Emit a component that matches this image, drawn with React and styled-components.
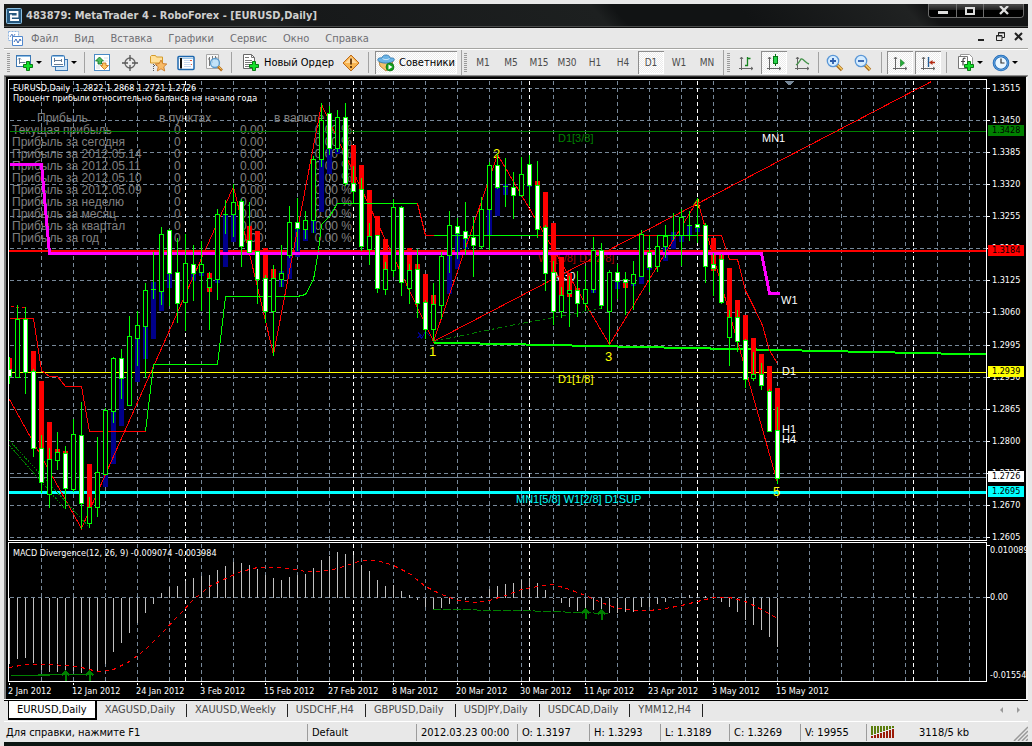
import styled, { createGlobalStyle } from 'styled-components';

const UI_FONT = '"DejaVu Sans Condensed", "Noto Sans", sans-serif';

const GlobalStyle = createGlobalStyle`
  * { box-sizing: border-box; }
  body {
    margin: 0;
    background: #e8e8e8;
    font-family: ${UI_FONT};
    font-size: 11px;
    color: #000;
  }
  button {
    font: inherit;
    color: inherit;
    background: none;
    border: 0;
    margin: 0;
    padding: 0;
  }
`;

const Window = styled.div`
  display: flex;
  flex-direction: column;
  min-height: 100vh;
  padding: 4px 4px 0;
`;

const TitleBar = styled.header`
  display: flex;
  align-items: center;
  height: 24px;
  padding: 0 4px 0 2px;
  background: linear-gradient(50deg, #191b1b 0 18%, #1f2121 26%, #17191a 30%, #1d2020 58%, #111314 60% 72%, #202222 88%, #131415 90%);
  border-bottom: 1px solid #101010;
  box-shadow: inset 0 -1px 0 #484a4a;
`;

const Caption = styled.h1`
  flex: 1;
  margin: 0 0 0 4px;
  font-size: 11px;
  font-weight: bold;
  color: #cfcfcf;
  white-space: nowrap;
`;

const WindowControls = styled.div`
  display: flex;
  align-self: flex-start;
  height: 14px;
  border: 1px solid #6d6d6d;
  border-top: 0;
  border-radius: 0 0 4px 4px;
  overflow: hidden;
`;

const WindowButton = styled.button`
  display: flex;
  align-items: center;
  justify-content: center;
  width: ${({ $wide }) => ($wide ? 40 : 27)}px;
  background: linear-gradient(#444 0 10%, #1b1b1b 50%, #000 50%);
  & + & { border-left: 1px solid #6d6d6d; }
`;

const MenuBar = styled.nav`
  display: flex;
  align-items: center;
  height: 21px;
  padding: 0 4px;
  color: #6f6f74;
  border-bottom: 1px solid #a5a5a2;
`;

const MenuItem = styled.button`
  padding: 0 8px;
  white-space: nowrap;
`;

const ChildControls = styled.div`
  display: flex;
  gap: 8px;
  margin-left: auto;
  color: #222;
`;

const Toolbar = styled.div`
  display: flex;
  align-items: center;
  height: 27px;
  padding-left: 3px;
  border-top: 1px solid #fff;
  border-bottom: 1px solid #8c8c8c;
  overflow: hidden;
`;

const Grip = styled.span`
  flex: none;
  width: 3px;
  height: 20px;
  margin-right: ${({ $after }) => $after || 1}px;
  background: repeating-linear-gradient(#9a9a9a 0 1px, #e8e8e8 1px 2px);
`;

const Divider = styled.span`
  flex: none;
  width: 1px;
  height: ${({ $full }) => ($full ? 26 : 21)}px;
  margin: 0 ${({ $gap }) => $gap || 3}px;
  background: #a2a2a2;
`;

const pressed = 'repeating-conic-gradient(#fff 0 25%, #ebebeb 0 50%) 0 0 / 2px 2px';

const ToolButton = styled.button`
  display: flex;
  flex: none;
  align-items: center;
  justify-content: center;
  width: ${({ $narrow }) => ($narrow ? 26 : 28)}px;
  height: 23px;
  color: #4c4c4c;
  font-size: 10px;
  background: ${({ $on }) => ($on ? pressed : 'none')};
  box-shadow: ${({ $on }) => ($on ? 'inset 1px 1px 0 #8d8d8d, inset -1px -1px 0 #fff' : 'none')};
`;

const SplitButton = styled(ToolButton)`
  width: 35px;
  gap: 2px;
  padding-left: 1px;
`;

const LabelButton = styled(ToolButton)`
  width: auto;
  gap: 4px;
  margin: 0 ${({ $on }) => ($on ? 2 : 0)}px 0 ${({ $on }) => ($on ? 3 : 0)}px;
  padding: 0 ${({ $on }) => ($on ? 2 : 3)}px 0 ${({ $on }) => ($on ? 2 : 7)}px;
  color: #000;
  font-size: 11px;
  white-space: nowrap;
`;

const ToolGroup = styled.div`
  display: flex;
  flex: none;
  gap: 2px;
`;

const Arrow = styled.span`
  flex: none;
  border: solid transparent;
  border-width: 3px 3px 0;
  border-top-color: #000;
`;

const ChartWindow = styled.main`
  display: flex;
  flex-direction: column;
  gap: 1px;
  padding: 2px 0 0 2px;
  background: #000;
  border: solid #808080;
  border-width: 1px 2px 0;
  border-color: #333 #f2f2f2 #f2f2f2 #808080;
`;

const ChartRow = styled.section`
  display: grid;
  grid-template: ${({ $height }) => $height}px / 1fr 39px;
`;

const Plot = styled.div`
  position: relative;
  border: 1px solid #fff;
  overflow: hidden;
`;

const Drawing = styled.svg`
  position: relative;
  display: block;
  width: 100%;
  height: 100%;
  font-family: ${UI_FONT};
  font-size: 9px;
  fill: #fff;
`;

const TimeAxis = styled.div`
  height: 16px;
`;

const ProfitTable = styled.table`
  position: absolute;
  top: 32px;
  left: 3px;
  width: 340px;
  table-layout: fixed;
  border-collapse: collapse;
  font: 12px/12px "Liberation Sans", Arial, sans-serif;
  color: #808080;
  th, td {
    height: 12px;
    padding: 0;
    font-weight: normal;
    text-align: left;
    white-space: nowrap;
  }
  th:first-child { padding-left: 25px; }
  td:nth-child(2) { padding-left: 15px; }
  td:last-child { text-align: right; }
`;

const Tabs = styled.div`
  display: flex;
  height: 22px;
  padding-left: 4px;
  color: #444;
  border-top: 1px solid #fff;
  box-shadow: inset 0 1px 0 #000;
`;

const Tab = styled.button`
  position: relative;
  padding: 0 ${({ $active }) => ($active ? 8 : 12)}px 0 8px;
  height: ${({ $active }) => ($active ? 20 : 19)}px;
  white-space: nowrap;
  color: ${({ $active }) => ($active ? '#000' : '#4a4a4a')};
  background: ${({ $active }) => ($active ? '#fff' : 'none')};
  border: ${({ $active }) => ($active ? '1px solid #000' : '0')};
  border-right: ${({ $active }) => ($active ? '2px' : '0')} solid #000;
  border-bottom-width: ${({ $active }) => ($active ? 2 : 0)}px;
  &:not(:first-child)::after {
    content: "";
    position: absolute;
    top: 4px;
    right: 0;
    width: 1px;
    height: 13px;
    background: #222;
  }
`;

const TabScroll = styled.div`
  display: flex;
  gap: 12px;
  align-items: center;
  margin-left: auto;
  padding-right: 7px;
`;

const StatusBar = styled.footer`
  display: grid;
  grid-template-columns: 303px 109px 101px 72px 71px 69px 71px 66px 1fr;
  align-items: center;
  height: 21px;
  border-top: 1px solid #fff;
`;

const StatusCell = styled.span`
  display: flex;
  align-items: center;
  height: 17px;
  padding-left: ${({ $first }) => ($first ? 2 : 4)}px;
  border-left: ${({ $first }) => ($first ? 0 : 1)}px solid #9c9c9c;
  white-space: nowrap;
`;

const Traffic = styled(StatusCell)`
  gap: 24px;
`;

const Resize = styled.svg`
  align-self: flex-end;
  margin-left: auto;
`;

const BottomEdge = styled.div`
  height: 4px;
  margin-right: -4px;
  background: #0c1512;
`;

/* ---------- icons ---------- */

const Icon = ({ size = 18, children }) => (
  <svg width={size} height={size} viewBox="0 0 18 18" fill="none" aria-hidden="true">
    {children}
  </svg>
);

const Plus = ({ x, y }) => (
  <path
    transform={`translate(${x} ${y})`}
    d="M3.5.5h3v3h3v3h-3v3h-3v-3h-3v-3h3z"
    fill="#13e02a"
    stroke="#077a12"
  />
);

const NewChartIcon = () => (
  <Icon>
    <rect x=".5" y="1.500" width="14" height="11" fill="#fff" stroke="#3c78b4" />
    <path d="M1 2.500h13" stroke="#8ebfe8" />
    <path d="M3.500 4v6M2 5.500l1.500-1.500L5 5.500M3.500 8.500h6" stroke="#667c94" />
    <Plus x={7} y={7} />
  </Icon>
);

const ProfilesIcon = () => (
  <Icon>
    <rect x="4.500" y="5.500" width="12" height="11" fill="#cfe5f7" stroke="#3c78b4" />
    <rect x=".5" y="1.500" width="13" height="11" rx="1" fill="#fff" stroke="#3c78b4" />
    <path d="M1 2.500h12" stroke="#8ebfe8" />
    <path d="M3.500 4v4M3 6.500h8M10.500 5v3M3 10.500h9" stroke="#667c94" />
  </Icon>
);

const MarketIcon = () => (
  <Icon>
    <rect x="1.500" y=".5" width="15" height="16" fill="#fff" stroke="#4a8ac6" />
    <path d="M11 4h4M11 7h4M3 12h4M3 14h4" stroke="#d9dde4" />
    <path d="M6.500 3l4 4H8.500v3H5V7H2.500z" fill="#4dbb60" stroke="#08711d" strokeWidth=".8" />
    <path d="M11.500 15.500l-4-4h2V9h3.500v2.500h2.500z" fill="#ffc861" stroke="#c06b12" strokeWidth=".8" />
  </Icon>
);

const CrossIcon = () => (
  <Icon>
    <circle cx="9" cy="9" r="5" stroke="#666" strokeWidth="1.300" />
    <path d="M9 1v6M9 11v6M1 9h6M11 9h6" stroke="#555" strokeWidth="1.300" />
  </Icon>
);

const FavoritesIcon = () => (
  <Icon>
    <path d="M1.500 9V2.500l1-1h4l1 1.500h6V9z" fill="#ffe09a" stroke="#d49b2b" />
    <path d="M4.500 10v7M5 11.500h3" stroke="#555" strokeDasharray="1 1" />
    <path
      d="M12 6l1.800 3.600 4 .4-3 2.800.9 4.200-3.700-2.200L8.300 17l.9-4.200-3-2.800 4-.4z"
      fill="#f8bb67"
      stroke="#c66e18"
      strokeWidth=".8"
    />
  </Icon>
);

const NavigatorIcon = () => (
  <Icon>
    <rect x="1" y="2.500" width="16" height="13" rx="1" fill="#fff" stroke="#1d67ae" strokeWidth="1.500" />
    <path d="M2 4.500h14" stroke="#9bc7ea" />
    <path d="M4 4v10.500" stroke="#111" strokeWidth="2" />
    <path d="M7 6.500h8M7 8.500h6M7 10.500h8M7 12.500h7" stroke="#c8d8ee" />
    <path d="M13 6.500h2M14 10.500h1" stroke="#e45a3c" />
  </Icon>
);

const TesterIcon = () => (
  <Icon>
    <path d="M1.500.5h12v14h-12z" fill="#f8f8f8" stroke="#a8a8a8" />
    <path d="M4.500 3v9M3 5h1.500M7.500 2v7M10.500 2v4M10.500 4h2" stroke="#777" />
    <circle cx="10" cy="9" r="4.500" fill="#b9def8" fillOpacity=".85" stroke="#5d9ccd" strokeWidth="1.300" />
    <path d="M13 12.500l4 4" stroke="#b86f1c" strokeWidth="2.600" />
    <path d="M13.500 12.500l3 3" stroke="#f4c45a" />
  </Icon>
);

const OrderIcon = () => (
  <Icon>
    <path d="M1.500.5h8l3 3v11h-11z" fill="#fff" stroke="#686868" />
    <path d="M9.500.5v3h3M3 3.500h4M3 6.500h7M3 8.500h7M3 10.500h5M3 12.500h4" stroke="#777" />
    <Plus x={7} y={7} />
  </Icon>
);

const AlertIcon = () => (
  <Icon>
    <path d="M9 1l8 8-8 8-8-8z" fill="#f8b550" stroke="#bd6a1a" strokeLinejoin="round" />
    <path d="M9 3l6 6H3z" fill="#ffd99b" />
    <path d="M9 4.500v6M9 12v2" stroke="#5e3107" strokeWidth="1.800" />
  </Icon>
);

const ExpertIcon = () => (
  <Icon>
    <path d="M2 7l14 0-2 6-5 4-6-5z" fill="#f2c16c" stroke="#ad7425" strokeWidth=".8" />
    <path d="M5 4c0-4 8-4 8 0 4-.5 5 1 4 2.500C14 10 3 10 1 6.500 0 4 3 3.500 5 4z" fill="#69b3e6" stroke="#2871aa" strokeWidth=".8" />
    <path d="M5.500 4.500c1.500 1.500 5.500 1.500 7 0" stroke="#c9e7fb" />
    <circle cx="13" cy="13" r="4" fill="#13a01c" stroke="#087011" strokeWidth=".7" />
    <path d="M11.500 10.500v5l4-2.500z" fill="#fff" />
  </Icon>
);

const Axes = () => (
  <path d="M4.500 3v13M2 14.500h14M3 5l1.500-2L6 5M14 13l2 1.500L14 16" stroke="#666" />
);

const BarsIcon = () => (
  <Icon>
    <Axes />
    <path d="M10.500 3v9M10.500 4.500h3M8 11.500h3" stroke="#16851f" strokeWidth="1.300" />
  </Icon>
);

const CandlesIcon = () => (
  <Icon>
    <Axes />
    <path d="M10.500 0v12" stroke="#087415" />
    <rect x="8.500" y="2.500" width="4" height="7" fill="#27d34b" stroke="#087415" />
  </Icon>
);

const LineIcon = () => (
  <Icon>
    <Axes />
    <path d="M3 11C8 8 7 3 10 5.500S13 9 16 10" stroke="#46934b" strokeWidth="1.400" />
  </Icon>
);

const ZoomIcon = ({ plus }) => (
  <Icon>
    <path d="M11 11l5 5" stroke="#a9691c" strokeWidth="3.400" />
    <path d="M11.500 11l4.500 4.500" stroke="#f4cf67" strokeWidth="1.500" />
    <circle cx="7" cy="7" r="5.700" fill="#d5ecff" stroke="#5b97d6" strokeWidth="1.300" />
    <path d={plus ? 'M4 7h6M7 4v6' : 'M4 7h6'} stroke="#2c5dac" strokeWidth="1.800" />
  </Icon>
);

const ScrollIcon = () => (
  <Icon>
    <Axes />
    <path d="M9.500 5.500v7l4-3.500z" fill="#24ad39" stroke="#0c7219" strokeWidth=".6" />
  </Icon>
);

const ShiftIcon = () => (
  <Icon>
    <Axes />
    <path d="M9.500 3v10" stroke="#235f99" strokeWidth="1.400" />
    <path d="M16 8.500h-4" stroke="#b32a13" strokeWidth="1.500" />
    <path d="M10 8.500l3.500-2.500v5z" fill="#b32a13" />
  </Icon>
);

const IndicatorsIcon = () => (
  <Icon>
    <path d="M3.500 3V.5h9l3 3v10H13" fill="#fff" stroke="#999" />
    <path d="M1.500 2.500h9v12h-9z" fill="#fff" stroke="#777" />
    <path d="M8.500 4.500c-2-1-2.500 0-2.500 2v5M4 7.500h4" stroke="#444" strokeWidth="1.200" />
    <Plus x={7} y={7} />
  </Icon>
);

const PeriodsIcon = () => (
  <Icon>
    <circle cx="9" cy="9" r="7" fill="#e9f6ff" stroke="#1c66b4" strokeWidth="2.600" />
    <circle cx="9" cy="9" r="7" stroke="#76b7ef" strokeWidth=".8" />
    <path d="M9 4.500V9h3.500" stroke="#333" strokeWidth="1.200" />
  </Icon>
);

const LogoIcon = () => (
  <svg width="16" height="16" viewBox="0 0 16 16" fill="none" aria-hidden="true">
    <rect x=".5" y=".5" width="15" height="15" rx="1" fill="#25577e" stroke="#8cc0e2" />
    <path d="M3 4h8.500v4.500H5V12h8" stroke="#fff" strokeWidth="1.800" />
    <path d="M5 6.500V9" stroke="#fff" strokeWidth="1.800" />
  </svg>
);

const DocIcon = () => (
  <svg width="15" height="15" viewBox="0 0 15 15" fill="none" aria-hidden="true">
    <path d="M.5.5h10v9H.5z" fill="#fff" stroke="#8eb5e2" strokeDasharray="2 1" />
    <path d="M2 6l2-3 1 3 2-3" stroke="#6488c6" />
    <path d="M4.500 5.500h10v9h-10z" fill="#fff" stroke="#5289ce" />
    <path d="M6 11l2-3 2 4 2-4 1 2" stroke="#3c6cb9" />
  </svg>
);

/* ---------- chart data, in window pixels ---------- */

// x, high, low, body top, body bottom, kind (u = up, d = down), trend colour, trend top, trend bottom
const candles = [
  [9, 357, 384, 369, 376, 'd', 'r', 358, 369],
  [17, 305, 377, 319, 377, 'u'],
  [25, 307, 394, 319, 372, 'd'],
  [33, 369, 457, 371, 448, 'd', 'r', 351, 371],
  [41, 435, 493, 448, 482, 'd', 'r', 381, 448],
  [49, 448, 508, 459, 494, 'u', 'r', 422, 459],
  [57, 432, 470, 452, 460, 'u', 'r', 449, 452],
  [65, 446, 509, 453, 488, 'd', 'r', 451, 453],
  [73, 419, 492, 434, 489, 'u'],
  [81, 402, 529, 435, 503, 'd'],
  [89, 497, 528, 507, 523, 'u', 'r', 464, 507],
  [97, 437, 517, 472, 507, 'u'],
  [105, 408, 475, 410, 474, 'u', 'b', 474, 487],
  [113, 357, 423, 358, 411, 'u', 'b', 411, 464],
  [121, 349, 399, 358, 378, 'd', 'b', 378, 426],
  [129, 316, 405, 336, 405, 'u'],
  [137, 311, 366, 325, 338, 'u', 'b', 338, 382],
  [145, 283, 378, 290, 326, 'u', 'b', 326, 359],
  [153, 252, 299, 289, 290, 'u', 'b', 282, 339],
  [161, 227, 305, 234, 291, 'u', 'b', 291, 311],
  [169, 229, 306, 230, 273, 'd', 'b', 273, 288],
  [177, 238, 323, 272, 303, 'd'],
  [185, 234, 331, 263, 302, 'u'],
  [193, 245, 301, 264, 273, 'd', 'b', 273, 281],
  [201, 241, 311, 264, 272, 'u', 'b', 272, 276],
  [209, 272, 330, 278, 287, 'u', 'r', 273, 292],
  [217, 209, 300, 214, 279, 'u', 'b', 279, 283],
  [225, 200, 234, 214, 215, 'u', 'b', 214, 267],
  [233, 184, 237, 202, 214, 'u', 'b', 214, 242],
  [241, 199, 267, 201, 246, 'd'],
  [249, 202, 252, 240, 252, 'd', 'r', 226, 240],
  [257, 251, 304, 251, 279, 'd', 'r', 231, 251],
  [265, 275, 323, 278, 311, 'd', 'r', 248, 278],
  [273, 265, 356, 278, 311, 'u', 'r', 269, 278],
  [281, 245, 287, 273, 279, 'u', 'b', 271, 287],
  [289, 206, 258, 222, 255, 'u', 'b', 255, 279],
  [297, 198, 251, 222, 228, 'd', 'b', 228, 257],
  [305, 211, 239, 220, 229, 'u', 'b', 229, 241],
  [313, 156, 233, 159, 220, 'u', 'b', 220, 233],
  [321, 103, 167, 120, 159, 'u', 'b', 159, 212],
  [329, 106, 155, 113, 148, 'd', 'b', 148, 174],
  [337, 110, 152, 117, 148, 'u', 'b', 148, 154],
  [345, 103, 186, 117, 183, 'd'],
  [353, 166, 203, 183, 191, 'd', 'r', 145, 183],
  [361, 178, 251, 189, 246, 'd', 'r', 165, 189],
  [369, 223, 265, 236, 249, 'u', 'r', 190, 236],
  [377, 235, 293, 235, 288, 'd', 'r', 216, 235],
  [385, 262, 295, 269, 289, 'u', 'r', 239, 269],
  [393, 199, 277, 207, 270, 'u'],
  [401, 206, 296, 207, 282, 'd'],
  [409, 264, 304, 270, 288, 'u', 'r', 248, 270],
  [417, 249, 318, 269, 303, 'd', 'r', 264, 269],
  [425, 300, 339, 302, 329, 'd', 'r', 274, 302],
  [433, 283, 341, 304, 329, 'u', 'r', 295, 304],
  [441, 252, 319, 256, 305, 'u'],
  [449, 211, 273, 225, 255, 'u', 'b', 255, 294],
  [457, 218, 259, 226, 233, 'd', 'b', 233, 269],
  [465, 202, 255, 231, 238, 'd', 'b', 238, 249],
  [473, 217, 277, 237, 245, 'd'],
  [481, 197, 249, 209, 246, 'u'],
  [489, 162, 250, 165, 209, 'u', 'b', 209, 236],
  [497, 154, 189, 165, 187, 'd', 'b', 187, 216],
  [505, 158, 207, 186, 187, 'u', 'b', 184, 195],
  [513, 172, 219, 187, 195, 'd'],
  [521, 157, 197, 174, 195, 'u'],
  [529, 155, 206, 164, 185, 'd', 'b', 185, 187],
  [537, 161, 238, 185, 229, 'd', 'r', 181, 185],
  [545, 225, 291, 227, 273, 'd', 'r', 192, 227],
  [553, 261, 325, 272, 311, 'd', 'r', 223, 272],
  [561, 287, 318, 295, 311, 'u', 'r', 257, 295],
  [569, 276, 327, 290, 293, 'u', 'r', 273, 297],
  [577, 271, 317, 290, 303, 'd', 'r', 288, 290],
  [585, 266, 311, 289, 303, 'u'],
  [593, 237, 293, 250, 289, 'u', 'b', 289, 293],
  [601, 243, 309, 250, 305, 'd'],
  [609, 270, 344, 272, 311, 'u'],
  [617, 264, 299, 272, 281, 'd', 'b', 281, 289],
  [625, 272, 315, 279, 282, 'd', 'r', 283, 288],
  [633, 261, 310, 274, 283, 'u', 'b', 283, 286],
  [641, 230, 276, 234, 276, 'u', 'b', 276, 284],
  [649, 235, 292, 252, 267, 'd', 'b', 267, 270],
  [657, 235, 272, 246, 266, 'u'],
  [665, 225, 258, 236, 246, 'u', 'b', 246, 261],
  [673, 213, 240, 235, 236, 'u', 'b', 232, 249],
  [681, 209, 266, 217, 235, 'u', 'b', 235, 242],
  [689, 211, 241, 225, 226, 'u', 'b', 225, 236],
  [697, 198, 243, 224, 227, 'd', 'b', 227, 232],
  [705, 223, 283, 225, 266, 'd'],
  [713, 253, 296, 264, 268, 'd', 'r', 238, 271],
  [721, 254, 304, 259, 302, 'd', 'r', 255, 259],
  [729, 310, 366, 317, 337, 'u', 'r', 268, 317],
  [737, 310, 352, 317, 341, 'd', 'r', 300, 317],
  [745, 339, 388, 340, 379, 'd', 'r', 315, 340],
  [753, 352, 381, 374, 378, 'u', 'r', 338, 374],
  [761, 363, 390, 374, 385, 'd', 'r', 354, 374],
  [769, 389, 431, 391, 431, 'd', 'r', 366, 391],
  [777, 407, 484, 430, 478, 'd', 'r', 388, 430],
];

const macd = [
  663, 658, 657, 662, 669, 671, 671, 673, 670, 672, 671, 671, 663, 651, 642, 632, 622, 612, 603,
  592, 586, 585, 580, 577, 575, 574, 569, 565, 561, 562, 564, 568, 574, 577, 579, 576, 574, 573,
  567, 559, 555, 551, 553, 554, 564, 570, 579, 585, 584, 590, 594, 599, 606, 609, 607, 603, 600,
  599, 596, 595, 588, 585, 583, 582, 579, 577, 582, 589, 598, 602, 606, 610, 611, 609, 612, 612,
  612, 611, 611, 606, 606, 603, 601, 598, 596, 594, 595, 595, 598, 601, 606, 611, 619, 624, 629,
  636, 646,
];

const signal =
  '9,667 25,664 49,664 65,665 81,667 97,671 113,669 129,661 145,649 161,633 177,616 193,599 209,586 225,578 241,571 257,567 273,567 289,568 305,571 321,571 337,568 361,560 377,560 393,565 409,573 425,586 441,594 457,600 473,602 489,600 505,595 521,589 537,586 553,584 569,589 585,595 601,602 617,608 633,610 649,610 665,608 681,605 697,601 713,597 729,597 745,601 761,609 777,618';

const gridX = Array.from({ length: 30 }, (_, i) => 41 + i * 32);
const monthX = [185, 353, 529, 697, 913];

const prices = [
  ['1.3515', 88], ['1.3450', 120], ['1.3385', 152], ['1.3320', 184], ['1.3255', 216],
  ['1.3190', 248], ['1.3125', 280], ['1.3060', 312], ['1.2995', 345], ['1.2930', 377],
  ['1.2865', 409], ['1.2800', 441], ['1.2735', 473], ['1.2670', 505], ['1.2605', 537],
];

const priceTags = [
  ['1.3428', 130, '#008000'],
  ['1.3184', 250, '#ff0000'],
  ['1.2939', 371, '#ffff00'],
  ['1.2726', 476, '#ffffff'],
  ['1.2695', 491, '#00ffff'],
];

const dates = [
  '2 Jan 2012', '12 Jan 2012', '24 Jan 2012', '3 Feb 2012', '15 Feb 2012', '27 Feb 2012',
  '8 Mar 2012', '20 Mar 2012', '30 Mar 2012', '11 Apr 2012', '23 Apr 2012', '3 May 2012',
  '15 May 2012',
];

// text, x, baseline, colour, size
const chartLabels = [
  ['1', 429, 356, '#ffff00', 13],
  ['2', 493, 158, '#ffff00', 13],
  ['3', 605, 361, '#ffff00', 13],
  ['4', 693, 208, '#ffff00', 13],
  ['5', 773, 496, '#ffff00', 13],
  ['MN1', 762, 142, '#ffffff', 11],
  ['W1', 781, 304, '#ffffff', 11],
  ['D1', 782, 375, '#ffffff', 11],
  ['H1', 782, 433, '#ffffff', 11],
  ['H4', 782, 443, '#ffffff', 11],
  ['M30', 554, 280, '#ffffff', 11],
  ['D1[3/8]', 558, 142, '#008000', 11],
  ['W1[5/8] D1[2/8]', 538, 262, '#b00000', 11],
  ['D1[1/8]', 558, 383, '#ffff00', 11],
  ['MN1[5/8] W1[2/8] D1SUP', 516, 503, '#00ffff', 11],
];

const profitRows = [
  'Текущая прибыль', 'Прибыль за сегодня', 'Прибыль за 2012.05.14', 'Прибыль за 2012.05.11',
  'Прибыль за 2012.05.10', 'Прибыль за 2012.05.09', 'Прибыль за неделю', 'Прибыль за месяц',
  'Прибыль за квартал', 'Прибыль за год',
];

const Line = ({ points, color, ...rest }) => (
  <polyline points={points} fill="none" stroke={color} {...rest} />
);

const Grid = ({ top, bottom, rows }) => (
  <g stroke="#778899" strokeDasharray="4 3">
    {rows.map((y) => <line key={y} x1="9" x2="3000" y1={y} y2={y} />)}
    {gridX.map((x) => <line key={x} x1={x} x2={x} y1={top} y2={bottom} />)}
    <g stroke="#fff">
      {monthX.map((x) => <line key={x} x1={x} x2={x} y1={top} y2={bottom} />)}
    </g>
  </g>
);

const TrendBar = ({ x, color, top, bottom }) => (
  <rect x={x - 2} y={top} width="5" height={bottom - top} fill={color === 'r' ? '#ff0000' : '#00008b'} />
);

const Candle = ({ data }) => {
  const [x, high, low, top, bottom, kind] = data;
  const height = bottom - top + 1;
  return (
    <g fill="#00ff00">
      <rect x={x} y={high} width="1" height={low - high} />
      <rect x={x - 2} y={top} width="5" height={height < 3 ? 1 : height} />
      {height > 2 && (
        <rect x={x - 1} y={top + 1} width="3" height={height - 2} fill={kind === 'u' ? '#000' : '#fff'} />
      )}
    </g>
  );
};

const PricePlot = () => (
  <Drawing role="img" aria-label="EURUSD, Daily">
    <g transform="translate(-8.500 -79.500)" shapeRendering="crispEdges">
      <Grid top={80} bottom={540} rows={prices.map((p) => p[1])} />
      <path d="M783 80h12l-6 5z" fill="#778899" />
      <line x1="9" x2="3000" y1="131" y2="131" stroke="#008000" />
      <line x1="9" x2="3000" y1="477" y2="477" stroke="#778899" />
      <line x1="9" x2="3000" y1="372" y2="372" stroke="#ffff00" />
      <rect x="8" y="249" width="3000" height="2" fill="#ff0000" />
      <rect x="8" y="490" width="3000" height="3" fill="#00ffff" />
      <Line color="#00ff00" strokeWidth="2" points="433,342 986,354" />
    </g>
    <g transform="translate(-9 -80)" fontFamily='"Liberation Sans", Arial, sans-serif'>
      {chartLabels.map(([text, x, y, fill, size]) => (
        <text key={text} x={x} y={y} fill={fill} fontSize={size}>{text}</text>
      ))}
    </g>
    <g transform="translate(-9 -80)" shapeRendering="crispEdges">
      {candles.filter((c) => c[6]).map((c) => (
        <TrendBar key={c[0]} x={c[0]} color={c[6]} top={c[7]} bottom={c[8]} />
      ))}
    </g>
    <g transform="translate(-8.500 -79.500)" shapeRendering="crispEdges">
      <Line color="#ff0000" points="9,399 81,528 233,186 273,354 321,104 433,341 497,154 609,344 697,200 777,482" />
      <Line color="#ff0000" points="433,341 931,81" />
      <Line color="#ff0000" points="9,318 33,318 41,370 49,376 57,376 65,386 81,386 89,431 145,431" />
      <Line color="#ff0000" points="10,306 14,306 18,307 25,307" strokeDasharray="3 3" />
      <Line color="#00ff00" points="145,431 153,364 217,364 225,296 297,296 305,294 313,279 318,250 321,224 329,216 337,203 417,203" />
      <Line color="#ff0000" points="417,203 425,235 433,235" />
      <Line color="#00ff00" points="433,235 537,235" />
      <Line color="#ff0000" points="537,235 657,235" />
      <Line color="#00ff00" points="657,235 697,235" />
      <Line color="#ff0000" points="697,235 721,235 729,259 737,259 745,290 755,310 762,325 769,350 777,363" />
      <Line color="#008000" points="9,440 89,527" strokeDasharray="2 1" />
      <Line color="#008000" points="9,445 65,509" strokeDasharray="2 1" />
      <Line color="#008000" points="433,341 505,326 601,308" strokeDasharray="5 3 2 3" />
      <Line color="#00008b" points="417,337 421,335 418,332 421,338 425,331 430,336" />
      <Line color="#ff00ff" strokeWidth="3" points="9,164 41,164 49,253 761,253 769,293 779,293" />
    </g>
    <g transform="translate(-9 -80)" shapeRendering="crispEdges">
      {candles.map((c) => <Candle key={c[0]} data={c} />)}
    </g>
    <text x="4" y="11">EURUSD,Daily&#160; 1.2822 1.2868 1.2721 1.2726</text>
    <text x="4" y="21">Процент прибыли относительно баланса на начало года</text>
  </Drawing>
);

const PriceAxis = () => (
  <Drawing aria-label="Price axis">
    <g transform="translate(-987 -79)">
      {prices.map(([label, y]) => (
        <g key={label}>
          <rect x="987" y={y} width="3" height="1" />
          <text x="992" y={y + 3}>{label}</text>
        </g>
      ))}
      {priceTags.map(([label, y, fill]) => (
        <g key={label}>
          <rect x="988" y={y - 5} width="36" height="11" fill={fill} />
          <text x="992" y={y + 3} fill="#000">{label}</text>
        </g>
      ))}
    </g>
  </Drawing>
);

const SignalArrow = ({ x, y }) => (
  <path d={`M${x} ${y}v10M${x - 4} ${y + 5}l4-4 4 4`} stroke="#008000" strokeWidth="2" fill="none" />
);

const MacdPlot = () => (
  <Drawing role="img" aria-label="MACD Divergence">
    <g transform="translate(-8.500 -542.500)" shapeRendering="crispEdges">
      <Grid top={543} bottom={681} rows={[597]} />
      {macd.map((y, i) => <line key={i} x1={9 + i * 8} x2={9 + i * 8} y1="597" y2={y} stroke="#c0c0c0" />)}
      <Line color="#ff0000" points={signal} strokeDasharray="4 4" />
      <Line color="#008000" points="10,675 49,675" />
      <Line color="#008000" points="37,674 89,674" />
      <Line color="#008000" points="433,609 520,610 608,613" strokeDasharray="8 2" />
      <SignalArrow x={65} y={670} />
      <SignalArrow x={89} y={670} />
      <SignalArrow x={585} y={608} />
      <SignalArrow x={601} y={609} />
    </g>
    <text x="4" y="13">MACD Divergence(12, 26, 9) -0.009074 -0.003984</text>
  </Drawing>
);

const MacdAxis = () => (
  <Drawing aria-label="MACD axis">
    <rect x="0" y="3" width="3" height="1" />
    <text x="3" y="11">0.010089</text>
    <rect x="0" y="55" width="3" height="1" />
    <text x="3" y="58">0.00</text>
    <text x="3" y="136">-0.01554</text>
  </Drawing>
);

const profitTable = (
  <ProfitTable>
    <colgroup>
      <col width="147" />
      <col width="81" />
      <col width="34" />
      <col width="78" />
    </colgroup>
    <thead>
      <tr>
        <th>Прибыль</th>
        <th colSpan={2}>в пунктах</th>
        <th>в валюте</th>
      </tr>
    </thead>
    <tbody>
      {profitRows.map((row) => (
        <tr key={row}>
          <td>{row}</td>
          <td>0</td>
          <td>0.00</td>
          <td>0.00 %</td>
        </tr>
      ))}
    </tbody>
  </ProfitTable>
);

const menu = ['Файл', 'Вид', 'Вставка', 'Графики', 'Сервис', 'Окно', 'Справка'];
const timeframes = ['M1', 'M5', 'M15', 'M30', 'H1', 'H4', 'D1', 'W1', 'MN'];
const tabs = [
  'EURUSD,Daily', 'XAGUSD,Daily', 'XAUUSD,Weekly', 'USDCHF,H4', 'GBPUSD,Daily', 'USDJPY,Daily',
  'USDCAD,Daily', 'YMM12,H4',
];
const status = ['Default', '2012.03.23 00:00', 'O: 1.3197', 'H: 1.3293', 'L: 1.3189', 'C: 1.3269', 'V: 19955'];

export default function App() {
  return (
    <Window>
      <GlobalStyle />
      <TitleBar>
        <LogoIcon />
        <Caption>483879: MetaTrader 4 - RoboForex - [EURUSD,Daily]</Caption>
        <WindowControls>
          <WindowButton aria-label="Minimize">
            <svg width="10" height="8"><rect y="4" width="10" height="3" fill="#ddd" /></svg>
          </WindowButton>
          <WindowButton aria-label="Maximize">
            <svg width="10" height="8"><rect x="1" y="1" width="8" height="6" fill="none" stroke="#ddd" strokeWidth="2" /></svg>
          </WindowButton>
          <WindowButton $wide aria-label="Close">
            <svg width="10" height="9"><path d="M1 0l8 8M9 0L1 8" stroke="#ddd" strokeWidth="2.400" /></svg>
          </WindowButton>
        </WindowControls>
      </TitleBar>

      <MenuBar>
        <DocIcon />
        {menu.map((item) => <MenuItem key={item}>{item}</MenuItem>)}
        <ChildControls>
          <button aria-label="Minimize chart">
            <svg width="12" height="10"><rect x="2" y="7" width="6" height="2" fill="#222" /></svg>
          </button>
          <button aria-label="Restore chart">
            <svg width="10" height="10" fill="none" stroke="#222">
              <path d="M2.500 3V.5h6v5H6M2 1h7" />
              <path d="M.5 3.500h5.500v5H.5zM0 4h6" />
            </svg>
          </button>
          <button aria-label="Close chart">
            <svg width="10" height="10"><path d="M1 1l7 7M8 1L1 8" stroke="#222" strokeWidth="2" /></svg>
          </button>
        </ChildControls>
      </MenuBar>

      <Toolbar>
        <Grip />
        <SplitButton aria-label="New chart"><NewChartIcon /><Arrow /></SplitButton>
        <SplitButton aria-label="Profiles"><ProfilesIcon /><Arrow /></SplitButton>
        <Divider />
        <ToolButton aria-label="Market watch"><MarketIcon /></ToolButton>
        <ToolButton aria-label="Data window"><CrossIcon /></ToolButton>
        <ToolButton aria-label="Navigator"><FavoritesIcon /></ToolButton>
        <ToolButton aria-label="Terminal"><NavigatorIcon /></ToolButton>
        <ToolButton aria-label="Strategy tester"><TesterIcon /></ToolButton>
        <Divider />
        <LabelButton><OrderIcon />Новый Ордер</LabelButton>
        <ToolButton aria-label="MetaEditor"><AlertIcon /></ToolButton>
        <Divider />
        <LabelButton $on><ExpertIcon />Советники</LabelButton>
        <Divider $full $gap={2} />
        <Grip $after={3} />
        <ToolGroup>
          {timeframes.map((t) => <ToolButton key={t} $narrow $on={t === 'D1'}>{t}</ToolButton>)}
        </ToolGroup>
        <Divider $full $gap={3} />
        <Grip $after={3} />
        <ToolGroup>
          <ToolButton $narrow aria-label="Bar chart"><BarsIcon /></ToolButton>
          <ToolButton $narrow $on aria-label="Candlesticks"><CandlesIcon /></ToolButton>
          <ToolButton $narrow aria-label="Line chart"><LineIcon /></ToolButton>
        </ToolGroup>
        <Divider />
        <ToolGroup>
          <ToolButton $narrow aria-label="Zoom in"><ZoomIcon plus /></ToolButton>
          <ToolButton $narrow aria-label="Zoom out"><ZoomIcon /></ToolButton>
        </ToolGroup>
        <Divider $gap={5} />
        <ToolGroup>
          <ToolButton $narrow $on aria-label="Auto scroll"><ScrollIcon /></ToolButton>
          <ToolButton $narrow $on aria-label="Chart shift"><ShiftIcon /></ToolButton>
        </ToolGroup>
        <Divider $gap={5} />
        <SplitButton aria-label="Indicators"><IndicatorsIcon /><Arrow /></SplitButton>
        <SplitButton aria-label="Periods"><PeriodsIcon /><Arrow /></SplitButton>
      </Toolbar>

      <ChartWindow>
        <ChartRow $height={462}>
          <Plot>
            {profitTable}
            <PricePlot />
          </Plot>
          <PriceAxis />
        </ChartRow>
        <ChartRow $height={140}>
          <Plot><MacdPlot /></Plot>
          <MacdAxis />
        </ChartRow>
        <TimeAxis>
          <Drawing aria-label="Time axis">
            {dates.map((date, i) => (
              <g key={date}>
                <rect x={1 + i * 64} y="0" width="1" height="2" />
                <text x={i * 64} y="11">{date}</text>
              </g>
            ))}
          </Drawing>
        </TimeAxis>
      </ChartWindow>

      <Tabs>
        {tabs.map((tab, i) => <Tab key={tab} $active={i === 0}>{tab}</Tab>)}
        <TabScroll>
          <button aria-label="Scroll left"><svg width="5" height="8"><path d="M4 1v6L1 4z" fill="#999" /></svg></button>
          <button aria-label="Scroll right"><svg width="5" height="8"><path d="M1 1v6l3-3z" fill="#999" /></svg></button>
        </TabScroll>
      </Tabs>

      <StatusBar>
        <StatusCell $first>Для справки, нажмите F1</StatusCell>
        {status.map((s) => <StatusCell key={s}>{s}</StatusCell>)}
        <Traffic>
          <svg width="24" height="12" aria-hidden="true">
            {[0, 1, 2, 3, 4, 5, 6, 7].map((i) => (
              <g key={i}>
                <rect x={i * 3} y="0" width="2" height={9 - i} fill="#5b7d0c" />
                <rect x={i * 3} y={10 - i} width="2" height={2 + i} fill="#9b1c08" />
              </g>
            ))}
          </svg>
          3118/5 kb
          <Resize width="15" height="15" aria-hidden="true">
            <path d="M1 15L15 1M5 15L15 5M9 15l6-6M13 15l2-2" stroke="#999" strokeWidth="1.500" />
          </Resize>
        </Traffic>
      </StatusBar>
      <BottomEdge />
    </Window>
  );
}
